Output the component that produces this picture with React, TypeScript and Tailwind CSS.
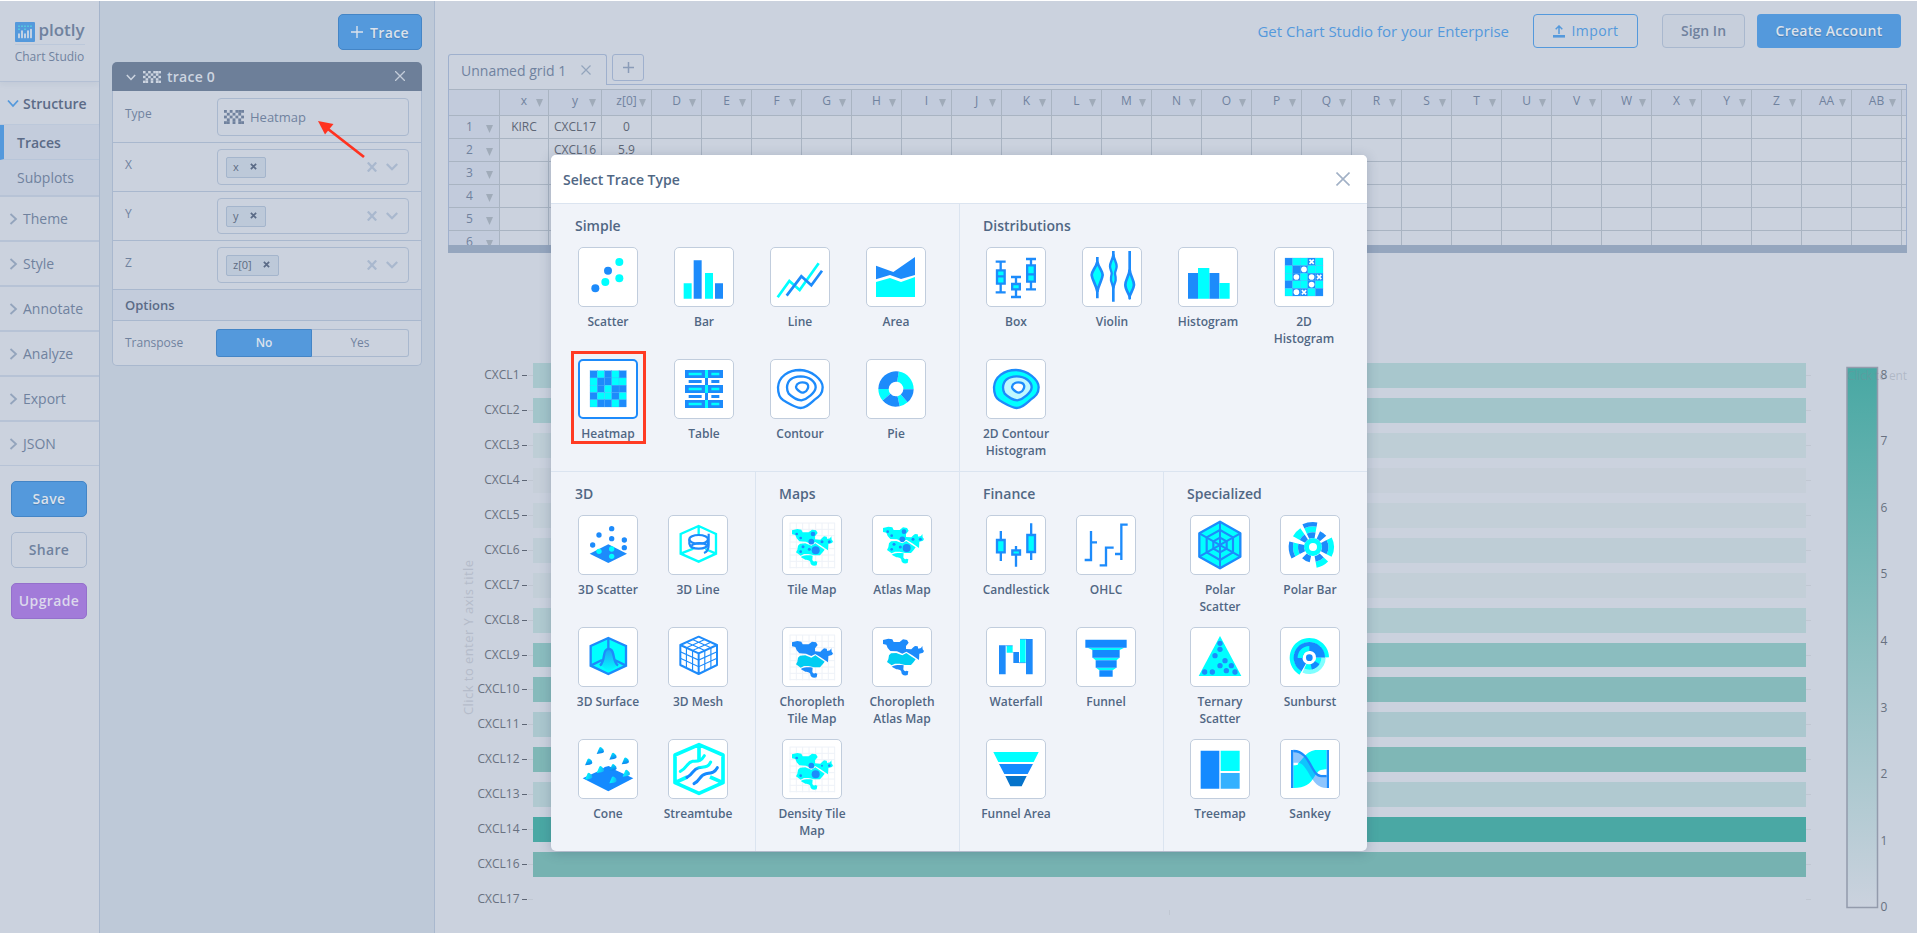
import type { ReactNode } from "react";

const B = "#1d8bfb";
const C = "#00ffff";

/* ---------- geometry helpers ---------- */

function ring(cx: number, cy: number, r0: number, r1: number, a0: number, a1: number) {
  const p = (r: number, a: number) => {
    const t = (a * Math.PI) / 180;
    return `${(cx + r * Math.sin(t)).toFixed(2)},${(cy - r * Math.cos(t)).toFixed(2)}`;
  };
  const large = a1 - a0 > 180 ? 1 : 0;
  return `M${p(r1, a0)}A${r1},${r1} 0 ${large} 1 ${p(r1, a1)}L${p(r0, a1)}A${r0},${r0} 0 ${large} 0 ${p(r0, a0)}Z`;
}

function Dots({ points, fill }: { points: number[][]; fill: string }) {
  return (
    <g fill={fill}>
      {points.map(([x, y, r], i) => (
        <circle key={i} cx={x} cy={y} r={r} />
      ))}
    </g>
  );
}

function Cells({ rows, x, y, size }: { rows: string[]; x: number; y: number; size: number }) {
  return (
    <>
      {rows.flatMap((row, j) =>
        row.split("").map((c, i) => {
          const px = x + i * size;
          const py = y + j * size;
          return (
            <g key={`${i}-${j}`}>
              <rect x={px} y={py} width={size} height={size} fill={c === "c" ? C : B} stroke="#3aa5ff" strokeWidth="0.8" />
              {c === "o" && <circle cx={px + size / 2} cy={py + size / 2} r="8.5" fill="#fff" />}
              {c === "x" && (
                <path
                  d={`M${px + 5},${py + 5}l${size - 10},${size - 10}m0,${10 - size}l${10 - size},${size - 10}`}
                  stroke="#fff"
                  strokeWidth="5"
                />
              )}
            </g>
          );
        }),
      )}
    </>
  );
}

const blobs = [
  "M24,85C26,53 55,33 90,33C125,34 158,62 158,85C158,104 148,112 134,122C118,136 108,147 92,147C76,146 55,132 40,124C26,116 24,103 24,85Z",
  "M51,85C52,64 66,53 92,52C118,52 137,68 137,85C136,100 112,121 94,124C78,123 64,112 56,104C51,97 51,91 51,85Z",
  "M78,84C80,72 92,69 104,71C117,74 116,84 112,91C108,101 96,103 90,98C84,94 78,90 78,84Z",
];

const mapNorth =
  "M30,46L46,42L58,44L62,52L80,52L90,44L102,46L107,54L99,64L99,73L115,74L121,68L126,64L134,65L136,72L144,70L148,64L149,74L153,79L150,84L139,87L138,106L118,92L100,81L88,87L72,80L52,79L44,70L40,60L30,58Z";
const mapMid =
  "M48,92L54,86L70,85L88,92L100,85L116,96L128,104L122,112L114,121L96,121L80,117L66,117L56,122L42,112L46,104Z";
const mapSouth =
  "M56,126C70,119 84,121 92,122L91,134C92,139 98,141 100,138L106,140L104,151C94,155 85,150 85,142C86,138 78,134 70,134Z";

function MapShape({ grid, north, mid, dots }: { grid?: boolean; north: string; mid: string; dots?: number[][] }) {
  return (
    <>
      {grid && (
        <g stroke="#eef2f8" strokeWidth="3">
          {[24, 43, 62, 81, 101, 120, 139, 158].map((v) => (
            <path key={v} d={`M${v},24V160M23,${v}H159`} />
          ))}
        </g>
      )}
      <g transform={grid ? undefined : "translate(3 -7)"}>
        <path d={mapNorth} fill={north} />
        <path d={mapMid} fill={mid} />
        <path d={mapSouth} fill={north} />
        {dots && <Dots fill={B} points={dots} />}
      </g>
    </>
  );
}

const mapDots = [
  [44, 57, 4], [56, 69, 4], [93, 57, 7], [88, 80, 8.5], [120, 80, 4.5],
  [142, 80, 4.5], [63, 95, 4.5], [82, 103, 4.5], [56, 110, 4], [101, 106, 12],
];

function Cone({ x, y, pale }: { x: number; y: number; pale?: boolean }) {
  return (
    <path
      transform={`translate(${x} ${y})`}
      d="M-11,10L-3,-9Q0,-13 5,-8Q11,-4 11,3Q10,7 3,8Z"
      fill={pale ? "url(#conePale)" : "url(#coneFill)"}
    />
  );
}

const meshLines = [1, 2]
  .map((k) => {
    const f = k / 3;
    const dx = 55 * f;
    const dy = 25 * f;
    return [
      `M${37 + dx},${54 + dy}v60`,
      `M${147 - dx},${54 + dy}v60`,
      `M37,${54 + 60 * f}l55,25l55,-25`,
      `M${37 + dx},${54 + dy}l55,-25`,
      `M${147 - dx},${54 + dy}l-55,-25`,
    ].join("");
  })
  .join("");

/* ---------- trace icons, on a 180 unit canvas ---------- */

const icons: Record<string, ReactNode> = {
  Scatter: (
    <>
      <Dots fill={B} points={[[52, 124, 12], [90, 71, 12]]} />
      <Dots fill={C} points={[[82, 105, 12], [124, 45, 12], [124, 94, 12]]} />
    </>
  ),
  Bar: (
    <>
      <path fill={C} d="M29,109h24v46h-24zM93,78h24v77h-24z" />
      <path fill={B} d="M59,40h24v115h-24zM123,109h24v46h-24z" />
    </>
  ),
  Line: (
    <g fill="none" strokeWidth="8">
      <path stroke={C} d="M23,151L58,102L89,129L146,49" />
      <path stroke={B} d="M50,146L94,88L124,115L156,71" />
    </g>
  ),
  Area: (
    <>
      <path fill={B} d="M30,56L82,75L147,30V84L105,96L72,84L30,97Z" />
      <path fill={C} d="M30,105L72,93L105,105L147,90V150H30Z" />
    </>
  ),
  Heatmap: <Cells x={36} y={35} size={21.8} rows={["bcbcb", "cbbcc", "cbcbb", "bccbc", "cbbcb"]} />,
  Table: (
    <>
      <path fill={B} d="M33,33h114v24h-114zM33,78h114v24h-114zM33,123h114v24h-114zM44,63h39v9h-39zM112,63h24v9h-24zM44,108h39v9h-39zM112,108h24v9h-24zM93,57h9v21h-9zM93,102h9v21h-9z" />
      <path fill={C} d="M44,41h39v8h-39zM112,41h24v8h-24zM44,86h39v8h-39zM112,86h24v8h-24zM44,131h39v8h-39zM112,131h24v8h-24zM93,33h9v24h-9zM93,78h9v24h-9zM93,123h9v24h-9z" />
    </>
  ),
  Contour: (
    <g fill="none" stroke={B} strokeWidth="7">
      {blobs.map((d) => (
        <path key={d} d={d} />
      ))}
    </g>
  ),
  Pie: (
    <>
      <path fill={C} d={ring(90, 90, 22, 53, 9, 91) + ring(90, 90, 22, 53, 139, 168) + ring(90, 90, 22, 53, 229, 270)} />
      <path fill={B} d={ring(90, 90, 22, 53, 91, 139) + ring(90, 90, 22, 53, 168, 229) + ring(90, 90, 22, 53, 270, 369)} />
    </>
  ),
  Box: (
    <g fill={C} stroke={B} strokeWidth="7">
      <path d="M29,44h30M29,136h30M75,90h30M75,150h30M120,36h30M120,127h30M44,44v92M90,90v60M135,36v91" />
      <path d="M33,70h23v40h-23zM78.500,111h23v16h-23zM123.500,55h23v49h-23z" />
      <path d="M33,88h23M123,82h23" />
    </g>
  ),
  Violin: (
    <g fill={C} stroke={B} strokeWidth="8">
      <path d="M46,30V154M94,12V164M143,12V157" />
      <path d="M46,44C50,62 62,72 62,84C61,98 50,112 46,134C42,112 30,98 29,84C29,72 42,62 46,44Z" />
      <path strokeWidth="7" d="M94,22C96,38 104,46 104,58C104,68 99,72 99,80C101,88 102,92 101,100C99,108 96,114 94,124C92,114 89,108 87,100C86,92 87,88 89,80C89,72 84,68 84,58C84,46 92,38 94,22Z" />
      <path d="M143,68C144,86 156,98 156,114C155,126 147,136 143,148C138,136 130,126 130,114C130,98 142,86 143,68Z" />
    </g>
  ),
  Histogram: (
    <>
      <path fill={B} d="M30,78h30v77h-30zM94,78h30v77h-30z" />
      <path fill={C} d="M60,63h34v92h-34zM124,108h31v47h-31z" />
    </>
  ),
  "2D Histogram": <Cells x={33} y={33} size={22.8} rows={["bccxc", "cbocc", "cocox", "bccoc", "coxcb"]} />,
  "2D Contour Histogram": (
    <g stroke={B} strokeWidth="7">
      <path d={blobs[0]} fill={C} />
      <path d={blobs[1]} fill="#bff7ff" />
      <path d={blobs[2]} fill="#fff" />
    </g>
  ),
  "3D Scatter": (
    <>
      <path fill={B} d="M35,116L91,88L147,116L91,144Z" />
      <Dots fill={B} points={[[101, 41, 8], [63, 60, 8], [101, 71, 8], [139, 75, 8], [44, 90, 8], [139, 98, 8]]} />
      <Dots fill={C} points={[[63, 109, 8], [101, 102, 8], [101, 124, 8]]} />
    </>
  ),
  "3D Line": (
    <g fill="none">
      <path stroke={C} strokeWidth="7" d="M92,33L144,57V116L92,140L38,116V57ZM92,33V60M38,116L76,101M144,116L112,102" />
      <g stroke={B} strokeWidth="6.500">
        <ellipse cx="92" cy="73" rx="28" ry="13" />
        <path d="M64,73V86C68,106 116,106 120,86V73" />
        <path d="M70,92C80,82 108,82 116,90" />
        <path d="M122,56V90C122,104 118,110 108,114" />
      </g>
    </g>
  ),
  "3D Surface": (
    <>
      <defs>
        <linearGradient id="bell" x1="0" y1="0" x2="0" y2="1">
          <stop offset="0" stopColor="#1fa0f5" />
          <stop offset="1" stopColor={C} />
        </linearGradient>
      </defs>
      <path fill={C} stroke={B} strokeWidth="7" d="M91,33L144,57V116L91,141L38,116V57Z" />
      <path fill="url(#bell)" d="M68,114C78,104 74,78 84,68Q92,60 100,68C110,78 106,104 118,116L91,134Z" />
      <path fill="none" stroke={B} strokeWidth="7" d="M91,33V66M38,116L72,99M144,116L110,99M66,116C82,100 74,78 84,69Q92,62 100,69C110,78 104,104 120,116" />
    </>
  ),
  "3D Mesh": (
    <g fill="none" stroke={B}>
      <path strokeWidth="3.500" d={meshLines} />
      <path strokeWidth="6" strokeLinejoin="round" d="M92,29L147,54V114L92,141L37,114V54ZM37,54L92,79L147,54M92,79V141" />
    </g>
  ),
  Cone: (
    <>
      <defs>
        <linearGradient id="coneFill" x1="0.300" y1="0" x2="0.600" y2="1">
          <stop offset="0" stopColor="#00eaff" />
          <stop offset="1" stopColor="#0d78ee" />
        </linearGradient>
        <linearGradient id="conePale" x1="0.200" y1="0.400" x2="1" y2="0.600">
          <stop offset="0" stopColor="#00f4ff" />
          <stop offset="1" stopColor="#14b4f4" />
        </linearGradient>
      </defs>
      <path fill="#148aff" d="M14,118L70,92Q80,82 92,81Q100,84 112,93L166,118L91,157Z" />
      {[[67, 35], [105, 52], [32, 69], [142, 66], [105, 86]].map(([x, y]) => (
        <Cone key={`${x}-${y}`} x={x} y={y} />
      ))}
      {[[67, 92], [32, 112], [145, 103], [105, 123]].map(([x, y]) => (
        <Cone key={`${x}-${y}`} x={x} y={y} pale />
      ))}
    </>
  ),
  Streamtube: (
    <g fill="none">
      <defs>
        <linearGradient id="flow" x1="0" y1="1" x2="1" y2="0">
          <stop offset="0" stopColor="#1488ff" />
          <stop offset="0.450" stopColor="#1488ff" />
          <stop offset="0.650" stopColor={C} />
        </linearGradient>
      </defs>
      <path stroke={C} strokeWidth="11" strokeLinejoin="round" d="M93,17L165,48V131L93,163L21,131V48ZM93,17V66M21,131L58,114M165,131L126,114" />
      <g strokeWidth="9" strokeLinecap="round">
        <path stroke={C} d="M37,97C58,88 56,70 74,67C92,66 98,68 109,50" />
        <path stroke="url(#flow)" d="M57,115C76,106 74,90 92,86C112,83 120,86 128,69" />
        <path stroke="#148aff" d="M78,134C98,124 94,108 114,104C134,101 140,100 148,86" />
      </g>
    </g>
  ),
  "Tile Map": <MapShape grid north={C} mid={C} dots={mapDots} />,
  "Atlas Map": <MapShape north={C} mid={C} dots={mapDots} />,
  "Choropleth Tile Map": <MapShape grid north={B} mid="#00cdf2" />,
  "Choropleth Atlas Map": <MapShape north={B} mid="#00cdf2" />,
  "Density Tile Map": (
    <MapShape grid north={C} mid={C} dots={[[44, 57, 4], [88, 80, 8.5], [120, 80, 3], [142, 80, 4], [56, 110, 4], [101, 106, 12]]} />
  ),
  Candlestick: (
    <g fill={C} stroke={B} strokeWidth="7">
      <path d="M44.500,48V138M90,93V155M135.500,25V135" />
      <path d="M33,75h23v37h-23zM79,106h23v13h-23zM124,60h23v51h-23z" />
    </g>
  ),
  OHLC: (
    <path fill="none" stroke={B} strokeWidth="7" d="M45,48V135H26M45,82H63M113,98H90V151H71M155,29H136V135M136,117H117" />
  ),
  "Polar Scatter": (
    <g fill="none" stroke={B} strokeWidth="7" strokeLinejoin="round">
      <path fill={C} d="M90,20L151,55V125L90,160L28,125V55Z" />
      <path d="M90,45L129,67V112L90,135L50,112V67ZM90,68L110,79V101L90,112L70,101V79Z" strokeWidth="6.500" />
      <path d="M90,20V160M28,55L151,125M151,55L28,125" strokeWidth="6" />
    </g>
  ),
  "Polar Bar": (
    <>
      <path
        fill={C}
        d={[
          ring(99, 96, 12, 27, 0, 180), ring(99, 96, 12, 27, 180, 359.900), ring(99, 96, 44, 62, -25, 10),
          ring(99, 96, 46, 63, 63, 118), ring(99, 96, 45, 63, 134, 170), ring(99, 96, 45, 60, 242, 283), ring(99, 96, 45, 68, 298, 326),
        ].join("")}
      />
      <path
        fill={B}
        d={[
          ring(99, 96, 27, 44, -25, 10), ring(99, 96, 62, 75, -25, 10), ring(99, 96, 27, 52, 24, 50), ring(99, 96, 27, 46, 63, 118),
          ring(99, 96, 28, 45, 134, 170), ring(99, 96, 27, 47, 192, 224), ring(99, 96, 27, 45, 242, 283), ring(99, 96, 60, 73, 242, 283),
          ring(99, 96, 27, 45, 298, 326),
        ].join("")}
      />
    </>
  ),
  Waterfall: (
    <>
      <path fill={B} d="M39,55h20v87h-20zM82,75h17v33h-17zM120,36h20v106h-20z" />
      <path fill={C} d="M62,56h18v21h-18zM102,37h17v70h-17z" />
      <path stroke={B} strokeWidth="2" d="M59,56h21M80,76h2M99,107h20M102,37h20" />
    </>
  ),
  Funnel: (
    <>
      <path fill={C} d="M35,62H145L131,69H49ZM50,92H130L122,100H59ZM60,122H121L110,130H70Z" />
      <path fill="#148aff" d="M28,38h124v24h-124zM49,69h82v23h-82zM59,100h63v22h-63zM70,130h40v19h-40z" />
    </>
  ),
  "Funnel Area": (
    <>
      <path fill={C} d="M22,39H158L143,69H37Z" />
      <path fill="#148aff" d="M39,75H141L125,105H55Z" />
      <path fill="#0573ca" d="M58,111H122L107,142H73Z" />
    </>
  ),
  "Ternary Scatter": (
    <>
      <path fill={C} d="M90,27L154,147H26Z" />
      <Dots
        fill={B}
        points={[[90, 49, 8], [90, 67, 8], [75, 86, 8], [105, 101, 8], [90, 116, 8], [124, 116, 8], [44, 135, 8], [67, 135, 8], [109, 131, 8], [135, 135, 8]]}
      />
    </>
  ),
  Sunburst: (
    <>
      <path fill={C} d={ring(88, 92, 46, 59, 210, 449)} />
      <path fill="#148aff" d={ring(88, 92, 20, 47, 210, 450)} />
      <path fill={C} d={ring(88, 92, 20, 35, 268, 360)} />
      <path fill="#80ffff" d={ring(88, 92, 35, 49, 90, 205)} />
      <path fill={C} d={ring(88, 92, 20, 36, 90, 205)} />
      <path fill="#148aff" d={ring(88, 92, 20, 36, 122, 168)} />
      <circle cx="88" cy="92" r="10" fill="#148aff" />
    </>
  ),
  Treemap: (
    <>
      <path fill="#148aff" d="M32,35h56v114h-56z" />
      <path fill={C} d="M92,35h57v61h-57z" />
      <path fill="#33b1ff" d="M92,102h57v47h-57z" />
    </>
  ),
  Sankey: (
    <>
      <path fill={C} d="M40,79C66,79 70,33 112,33H140V91C118,93 118,92 104,112C90,136 76,147 40,147Z" />
      <path fill={B} fillOpacity="0.500" d="M40,33C92,33 90,112 124,112H140V147C90,147 86,71 52,71H40Z" />
      <path fill="none" stroke={B} strokeWidth="7" d="M40,36C92,36 92,111 124,111H140" />
      <path fill="#fff" d="M40,72C52,72 54,74 54,75C54,77 52,79 40,79ZM140,92C124,92 117,98 117,104C119,107 126,107 140,107Z" />
      <path fill={B} d="M33,33h7v114h-7zM140,33h7v114h-7z" />
    </>
  ),
};

/* ---------- modal ---------- */

function TraceItem({ name, wide }: { name: string; wide?: boolean }) {
  const active = name === "Heatmap";
  return (
    <div className={`flex h-[112px] shrink-0 flex-col items-center ${wide ? "w-[96px]" : "w-[90px]"}`}>
      <div
        className={`flex size-[60px] items-center justify-center overflow-hidden rounded-[5px] bg-white ${
          active ? "border-2 border-[#1d8bfb]" : "border border-[#c1cddd]"
        }`}
      >
        <svg viewBox="0 0 180 180" className="size-[60px] shrink-0">
          {icons[name]}
        </svg>
      </div>
      <div className="mt-1.5 w-[71px] text-center text-[12px] leading-[17px] font-semibold text-[#506784]">{name}</div>
    </div>
  );
}

function Section({ title, items, wide, className }: { title: string; items: string[]; wide?: boolean; className: string }) {
  return (
    <section className={className}>
      <h3 className="mb-[11px] pl-6 text-[14px] leading-5 font-semibold text-[#506784]">{title}</h3>
      <div className={`flex flex-wrap ${wide ? "pl-[9px]" : "pl-3"}`}>
        {items.map((n) => (
          <TraceItem key={n} name={n} wide={wide} />
        ))}
      </div>
    </section>
  );
}

function Modal() {
  return (
    <div className="absolute top-[154px] left-[551px] flex h-[696px] w-[816px] flex-col overflow-hidden rounded-[5px] bg-[#f0f3f9] shadow-[0_2px_12px_rgba(42,63,95,0.25)]">
      <header className="flex h-[49px] shrink-0 items-center justify-between border-b border-[#dbe4f0] bg-white pr-[17px] pl-3">
        <h2 className="text-[14px] font-semibold text-[#506784]">Select Trace Type</h2>
        <svg viewBox="0 0 14 14" className="size-[14px]" fill="none" stroke="#a2b1c6" strokeWidth="1.6">
          <path d="M0.500 0.500L13.500 13.500M13.500 0.500L0.500 13.500" />
        </svg>
      </header>
      <div className="flex h-[268px] shrink-0 border-b border-[#dbe4f0]">
        <Section
          wide
          title="Simple"
          className="w-[409px] border-r border-[#dbe4f0] pt-3"
          items={["Scatter", "Bar", "Line", "Area", "Heatmap", "Table", "Contour", "Pie"]}
        />
        <Section
          wide
          title="Distributions"
          className="-ml-px w-[408px] pt-3"
          items={["Box", "Violin", "Histogram", "2D Histogram", "2D Contour Histogram"]}
        />
      </div>
      <div className="grid flex-1 grid-cols-4">
        <Section
          title="3D"
          className="-mr-px border-r border-[#dbe4f0] pt-3"
          items={["3D Scatter", "3D Line", "3D Surface", "3D Mesh", "Cone", "Streamtube"]}
        />
        <Section
          title="Maps"
          className="-mr-px border-r border-[#dbe4f0] pt-3"
          items={["Tile Map", "Atlas Map", "Choropleth Tile Map", "Choropleth Atlas Map", "Density Tile Map"]}
        />
        <Section
          title="Finance"
          className="-mr-px border-r border-[#dbe4f0] pt-3"
          items={["Candlestick", "OHLC", "Waterfall", "Funnel", "Funnel Area"]}
        />
        <Section
          title="Specialized"
          className="pt-3"
          items={["Polar Scatter", "Polar Bar", "Ternary Scatter", "Sunburst", "Treemap", "Sankey"]}
        />
      </div>
    </div>
  );
}

/* ---------- sidebar ---------- */

function Chevron({ className, dir }: { className: string; dir: "right" | "down" }) {
  return (
    <svg viewBox="0 0 12 12" className={className} fill="none" stroke="currentColor" strokeWidth="1.8">
      <path d={dir === "right" ? "M3.500 1L9 6L3.500 11" : "M1 3.500L6 9L11 3.500"} />
    </svg>
  );
}

function Sidebar() {
  return (
    <aside className="flex w-[100px] shrink-0 flex-col border-r border-[#a9b8ce]">
      <div className="flex h-[81px] flex-col items-center border-b border-[#b7c3d6] pt-[20px] shadow-[0_2px_6px_rgba(42,63,95,0.06)]">
        <div className="flex h-6 w-[70px] items-start justify-between border-b border-[#bcc8da]">
          <svg viewBox="0 0 20 20" className="mt-px size-5">
            <rect width="20" height="20" rx="1" fill="#5499dc" />
            <path stroke="#d4dbe6" strokeWidth="1.7" strokeLinecap="round" d="M4 12v3.500M7 9v6.500M10 12v3.500M13 9v6.500M16 7.500v8" />
            <g fill="#58cfe0">
              <path d="M3.200 3.500h1.600v1.600h-1.600zM6.200 3.500h1.600v1.600h-1.600zM9.200 3.500h1.600v1.600h-1.600zM12.200 3.500h1.600v1.600h-1.600zM15.200 3.500h1.600v1.600h-1.600zM3.200 6.500h1.600v1.600h-1.600zM9.200 6.500h1.600v1.600h-1.600z" />
            </g>
          </svg>
          <span className="w-[46px] text-[17px] leading-[18px] font-semibold tracking-[-0.050px] text-[#70829e]">plotly</span>
        </div>
        <div className="mt-[3px] text-[12px] leading-[18px] whitespace-nowrap text-[#70829e]">Chart Studio</div>
      </div>
      <div className="flex h-[43px] items-center border-b border-[#bcc8da] pl-[7px] text-[14px] font-semibold text-[#5b6b87] shadow-[0_2px_5px_rgba(42,63,95,0.08)]">
        <Chevron dir="down" className="mr-1 size-3 text-[#5499dc]" />
        Structure
      </div>
      <div className="flex h-[35px] items-center border-b border-[#b7c5d9] border-l-4 border-l-[#5499dc] bg-[#c3ccdc] pl-[13px] text-[14px] font-semibold text-[#5b6b87]">
        Traces
      </div>
      <div className="flex h-[37px] items-center border-b-2 border-[#b7c3d6] bg-[#c3ccdc] pl-[17px] text-[14px] text-[#70829e]">
        Subplots
      </div>
      {["Theme", "Style", "Annotate", "Analyze", "Export", "JSON"].map((t, i) => (
        <div
          key={t}
          className={`flex items-center border-[#b7c3d6] pl-[7px] text-[14px] text-[#70829e] ${i === 5 ? "h-[44px] border-b" : "h-[45px] border-b-2"}`}
        >
          <Chevron dir="right" className="mr-1 size-3 text-[#93a4bc]" />
          {t}
        </div>
      ))}
      <div className="flex flex-col gap-[15px] pt-[15px] pl-[11px] text-center text-[14px] leading-[34px] font-semibold tracking-[0.350px]">
        <div className="h-9 w-[76px] rounded-[5px] border border-[#4485c6] bg-[#5499dc] text-[#dbe2ec] [text-shadow:0_1px_1px_rgba(42,63,95,0.3)]">Save</div>
        <div className="h-9 w-[76px] rounded-[5px] border border-[#a9b8ce] text-[#70829e]">Share</div>
        <div className="h-9 w-[76px] rounded-[5px] border border-[#9470cc] bg-[#a27bd9] text-[#dbd8ec]">Upgrade</div>
      </div>
    </aside>
  );
}

/* ---------- trace panel ---------- */

function HeatGlyph({ className }: { className: string }) {
  const rows = ["x.x.xxx", ".x.x.x.", "x.x.x.x", ".x.x.x.", "xx.x.xx"];
  return (
    <svg viewBox="0 0 21 15" preserveAspectRatio="none" className={className} fill="currentColor">
      {rows.flatMap((r, j) => r.split("").map((c, i) => (c === "x" ? <rect key={`${i}${j}`} x={i * 3} y={j * 3} width="3" height="3" /> : null)))}
    </svg>
  );
}

function DataRow({ label, value }: { label: string; value: string }) {
  return (
    <div className="flex h-[49px] items-start border-b border-[#a9b8ce] pl-3">
      <span className="mt-[13px] w-[92px] text-[12px] leading-[18px] text-[#70829e]">{label}</span>
      <div className="mt-1.5 flex h-9 w-[192px] items-center rounded-[4px] border border-[#a9b8ce] pr-2.5 pl-2">
        <div className="flex h-[21px] items-center rounded-[2px] border border-[#a4b5cc] bg-[#bdc9d9] pr-2 pl-1.5 text-[11px] text-[#5d6c82]">
          <span className="pt-px">{value}</span>
          <svg viewBox="0 0 8 8" className="mb-px ml-[11px] size-[7px]" stroke="#5b6b87" strokeWidth="2">
            <path d="M1 1L7 7M7 1L1 7" />
          </svg>
        </div>
        <svg viewBox="0 0 10 10" className="ml-auto size-[10px]" stroke="#a9b8ce" strokeWidth="2.200">
          <path d="M0.800 0.500L9.200 9.500M9.200 0.500L0.800 9.500" />
        </svg>
        <svg viewBox="0 0 12 8" className="ml-[9px] h-2 w-3" fill="none" stroke="#a9b8ce" strokeWidth="2.200">
          <path d="M0.800 1L6 6.200L11.200 1" />
        </svg>
      </div>
    </div>
  );
}

function Panel() {
  return (
    <div className="w-[335px] shrink-0 border-r border-[#a9b8ce] bg-[#bec9d8] pt-[13px] pl-3">
      <div className="ml-[226px] flex h-9 w-[84px] items-center justify-center gap-[7px] rounded-[5px] border border-[#4485c6] bg-[#5499dc] text-[14px] font-semibold tracking-[0.350px] text-[#dbe2ec] [text-shadow:0_1px_1px_rgba(42,63,95,0.3)]">
        <svg viewBox="0 0 12 12" className="size-3" stroke="#dbe2ec" strokeWidth="1.400">
          <path d="M6 0V12M0 6H12" />
        </svg>
        Trace
      </div>
      <div className="mt-3 w-[310px]">
        <div className="flex h-[29px] items-center rounded-t-[5px] bg-[#6d7f99] pr-[17px] pl-[14px] text-[14px] font-semibold tracking-[0.250px] text-[#ccd4e0]">
          <Chevron dir="down" className="size-[10px]" />
          <HeatGlyph className="ml-[7px] h-3 w-[18px]" />
          <span className="ml-1.5">trace 0</span>
          <svg viewBox="0 0 10 10" className="mb-0.5 ml-auto size-[10px]" stroke="#c3ccd9" strokeWidth="1.300">
            <path d="M0 0L10 10M10 0L0 10" />
          </svg>
        </div>
        <div className="h-[275px] rounded-b-[5px] border border-t-0 border-[#a9b8ce] bg-[#cbd2de]">
          <div className="flex h-[52px] border-b border-[#a9b8ce] pl-3">
            <span className="mt-[14px] w-[92px] text-[12px] leading-[18px] text-[#70829e]">Type</span>
            <div className="mt-[7px] flex h-[38px] w-[192px] items-center rounded-[4px] border border-[#a9b8ce] pl-1.5 text-[13px] text-[#70829e]">
              <HeatGlyph className="mr-1.5 h-[14px] w-5" />
              <span className="pt-0.5">Heatmap</span>
            </div>
          </div>
          <DataRow label="X" value="x" />
          <DataRow label="Y" value="y" />
          <DataRow label="Z" value="z[0]" />
          <div className="flex h-[31px] items-center border-b border-[#a9b8ce] bg-[#c3ccdc] pt-px pl-3 text-[13px] font-semibold text-[#5b6b87]">Options</div>
          <div className="flex h-[44px] items-center pl-3">
            <span className="w-[91px] text-[12px] text-[#70829e]">Transpose</span>
            <div className="flex h-7 w-24 items-center justify-center rounded-l-[3px] border border-[#4485c6] bg-[#5499dc] text-[12px] font-semibold text-[#dbe2ec]">No</div>
            <div className="flex h-7 w-[97px] items-center justify-center rounded-r-[3px] border border-l-0 border-[#a9b8ce] text-[12px] text-[#70829e]">Yes</div>
          </div>
        </div>
      </div>
    </div>
  );
}

/* ---------- data grid ---------- */

const gridCols: [string, number][] = [
  ["x", 49],
  ["y", 53],
  ["z[0]", 50],
  ..."DEFGHIJKLMNOPQRSTUVWXYZ".split("").map((c): [string, number] => [c, 50]),
  ["AA", 50],
  ["AB", 50],
];
const gridData: Record<number, string[]> = { 1: ["KIRC", "CXCL17", "0"], 2: ["", "CXCL16", "5.9"] };

function Caret({ className }: { className: string }) {
  return (
    <svg viewBox="0 0 7 8" className={`h-2 w-[7px] shrink-0 ${className}`} fill="#a0abb9">
      <path d="M0 0H7L3.500 8Z" />
    </svg>
  );
}

function Grid() {
  return (
    <div className="flex h-[199px] w-[1459px] flex-col">
      <div className="flex h-[31px] shrink-0 items-start">
        <div className="flex h-[31px] w-[159px] items-center justify-between rounded-t-[3px] border border-b-0 border-[#9fb0cd] pr-[15px] pl-3 text-[14px] text-[#70829e]">
          Unnamed grid 1
          <svg viewBox="0 0 10 10" className="size-[10px]" stroke="#93a4bc" strokeWidth="1.200">
            <path d="M0.500 0.500L9.500 9.500M9.500 0.500L0.500 9.500" />
          </svg>
        </div>
        <div className="flex h-[31px] flex-1 items-start border-b border-[#9fb0cd] pl-[5px]">
          <div className="flex h-[27px] w-8 items-center justify-center rounded-[3px] border border-[#9fb0cd]">
            <svg viewBox="0 0 11 11" className="size-[11px]" stroke="#8a9cb8" strokeWidth="1.500">
              <path d="M5.500 0V11M0 5.500H11" />
            </svg>
          </div>
        </div>
      </div>
      <div className="h-1 shrink-0 border-x border-[#9fb0cd]" />
      <div className="min-h-0 flex-1 overflow-hidden border-x border-[#9fb0cd]">
        <div className="flex h-[27px] border-y border-[#a9b4c2] bg-[#c2cbdc] text-[12px] leading-[22px] text-[#70829e]">
          <div className="w-[51px] border-r border-[#a9b4c2]" />
          {gridCols.map(([c, w]) => (
            <div
              key={c}
              className={`relative border-r border-[#a9b4c2] text-center ${w === 49 ? "w-[49px]" : w === 53 ? "w-[53px]" : "w-[50px]"}`}
            >
              {c}
              <Caret className="absolute top-[9px] right-[5px]" />
            </div>
          ))}
        </div>
        {[1, 2, 3, 4, 5, 6].map((r) => (
          <div key={r} className="flex h-[23px] border-b border-[#a9b4c2] text-[12px] leading-[22px] text-[#5d6675]">
            <div className="flex w-[51px] items-center justify-between border-r border-[#a9b4c2] bg-[#c2cbdc] pr-1.5 pl-[17px] text-[#70829e]">
              {r}
              <Caret className="mt-[3px]" />
            </div>
            {gridCols.map(([c, w], i) => (
              <div
                key={c}
                className={`border-r border-[#a9b4c2] text-center ${w === 49 ? "w-[49px]" : w === 53 ? "w-[53px]" : "w-[50px]"}`}
              >
                {gridData[r]?.[i]}
              </div>
            ))}
          </div>
        ))}
      </div>
      <div className="h-2 shrink-0 bg-[#95a6be]" />
    </div>
  );
}

/* ---------- chart ---------- */

const bars: [string, number, string][] = [
  ["CXCL1", 363, "#a8c7cd"],
  ["CXCL2", 398, "#a2c5ca"],
  ["CXCL3", 433, "#beced6"],
  ["CXCL4", 468, "#c6cfd9"],
  ["CXCL5", 503, "#c3cfd8"],
  ["CXCL6", 538, "#becdd6"],
  ["CXCL7", 573, "#c3cfd8"],
  ["CXCL8", 608, "#b0cad0"],
  ["CXCL9", 643, "#8bbdbf"],
  ["CXCL10", 677, "#86babb"],
  ["CXCL11", 712, "#abc7ce"],
  ["CXCL12", 747, "#7fb7b6"],
  ["CXCL13", 782, "#b0c9d0"],
  ["CXCL14", 817, "#4aa8a4"],
  ["CXCL16", 852, "#76b2b1"],
  ["CXCL17", 887, "none"],
];

function Chart() {
  return (
    <svg viewBox="435 252 1482 681" className="h-[681px] w-[1482px] shrink-0" fontSize="12">
      <defs>
        <linearGradient id="scale" x1="0" y1="0" x2="0" y2="1">
          <stop offset="0" stopColor="#48a8a3" />
          <stop offset="0.500" stopColor="#89bebf" />
          <stop offset="1" stopColor="#cbd2de" />
        </linearGradient>
      </defs>
      {bars.map(([label, y, fill], i) => (
        <g key={label}>
          <rect x="533" y={y} width="1273" height={i === 8 ? 24 : 25} fill={fill} />
          <path d={`M528,${y + 12.500}H533M1806,${y + 12.500}H1811`} stroke="#c0c7d2" />
          <path d={`M522,${y + 12.500}H527`} stroke="#5d6675" />
          <text x="519.500" y={y + 16} textAnchor="end" fill="#687180">
            {label}
          </text>
        </g>
      ))}
      <path d="M1169.500,910V915" stroke="#c0c7d2" />
      <text transform="translate(472.500 715) rotate(-90)" fontSize="13" textLength="155" fill="#b5bcca">
        Click to enter Y axis title
      </text>
      <rect x="1847" y="367.500" width="30.500" height="540" fill="url(#scale)" stroke="#939bac" strokeWidth="1.500" />
      <text x="1847" y="380" fontSize="12" textLength="60" fill="#7d8898" fillOpacity="0.350">
        Click to ent
      </text>
      {[8, 7, 6, 5, 4, 3, 2, 1, 0].map((n, i) => (
        <text key={n} x="1880.500" y={378.500 + i * 66.600} fill="#687180">
          {n}
        </text>
      ))}
    </svg>
  );
}

/* ---------- page ---------- */

export default function App() {
  return (
    <div className="relative flex h-[933px] w-[1917px] overflow-hidden border-t border-white bg-[#cbd2de] font-['Open_Sans','Noto_Sans',sans-serif]">
      <Sidebar />
      <Panel />
      <main className="flex min-w-0 flex-1 flex-col">
        <div className="flex h-[53px] shrink-0 items-start justify-end pt-[13px] pr-4 text-[14px] leading-[34px] font-semibold">
          <span className="mr-6 text-[15px] font-normal text-[#5499dc]">Get Chart Studio for your Enterprise</span>
          <div className="mr-6 flex h-[34px] w-[105px] items-center justify-center gap-[7px] rounded-[4px] border border-[#5499dc] font-medium tracking-[0.400px] text-[#5499dc]">
            <svg viewBox="0 0 12 13" className="h-[13px] w-3" fill="none" stroke="#5499dc" strokeWidth="1.500">
              <path d="M6 9V1.200M2.700 4.200L6 1L9.300 4.200" />
              <path strokeWidth="2.600" d="M0 11.300H12" />
            </svg>
            Import
          </div>
          <div className="mr-3 h-[34px] w-[83px] rounded-[4px] border border-[#a9b8ce] bg-[#c7cfdc] text-center leading-[32px] text-[#70829e]">Sign In</div>
          <div className="h-[34px] w-[144px] rounded-[4px] bg-[#5499dc] text-center tracking-[0.250px] text-[#dbe2ec] [text-shadow:0_1px_1px_rgba(42,63,95,0.35)]">
            Create Account
          </div>
        </div>
        <div className="h-[198px] shrink-0 pl-[13px]">
          <Grid />
        </div>
        <Chart />
      </main>

      <Modal />

      <div className="absolute top-[350px] left-[571px] h-[93px] w-[75px] border-3 border-[#ff3b24]" />
      <svg viewBox="310 112 62 52" className="absolute top-[111px] left-[310px] h-[52px] w-[62px]">
        <path d="M364,157L328,129" stroke="#ff3320" strokeWidth="2.800" />
        <path d="M318,121L333.500,124L325,134.500Z" fill="#ff3320" />
      </svg>
    </div>
  );
}
